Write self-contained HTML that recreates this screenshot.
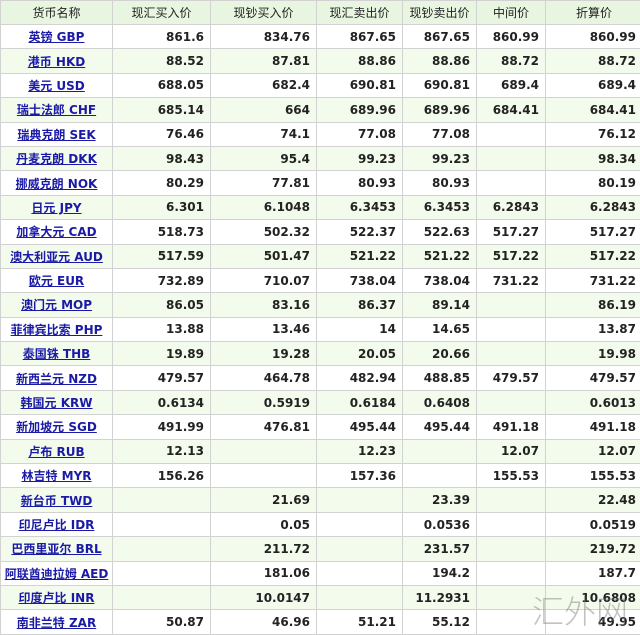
<!DOCTYPE html>
<html><head><meta charset="utf-8"><style>
body{margin:0;background:#fff;width:640px;height:634px;overflow:hidden;position:relative}
table{border-collapse:collapse;table-layout:fixed;width:642px;font-family:"DejaVu Sans","Noto Sans CJK SC",sans-serif;font-size:12px;font-weight:bold;color:#222}
td,th{border:1px solid #d2d2d2;height:23.4px;padding:0 6px;white-space:nowrap;overflow:hidden}
th{background:#e8f5e0;font-weight:normal;color:#222;height:23px;font-size:12px}
td{text-align:right}
td:first-child{text-align:center;padding:0}
tr:nth-child(odd) td{background:#f3fbec}
a{color:#1a1aa6;text-decoration:underline}
.wm{position:absolute;left:532px;top:592px;font-family:"Noto Sans CJK SC",sans-serif;font-size:32px;line-height:36px;color:rgba(120,120,120,.45);white-space:nowrap;font-weight:300}
</style></head><body>
<table>
<colgroup><col style="width:112px"><col style="width:98px"><col style="width:106px"><col style="width:86px"><col style="width:74px"><col style="width:69px"><col style="width:97px"></colgroup>
<tr><th>货币名称</th><th>现汇买入价</th><th>现钞买入价</th><th>现汇卖出价</th><th>现钞卖出价</th><th>中间价</th><th>折算价</th></tr>
<tr><td><a>英镑 GBP</a></td><td>861.6</td><td>834.76</td><td>867.65</td><td>867.65</td><td>860.99</td><td>860.99</td></tr>
<tr><td><a>港币 HKD</a></td><td>88.52</td><td>87.81</td><td>88.86</td><td>88.86</td><td>88.72</td><td>88.72</td></tr>
<tr><td><a>美元 USD</a></td><td>688.05</td><td>682.4</td><td>690.81</td><td>690.81</td><td>689.4</td><td>689.4</td></tr>
<tr><td><a>瑞士法郎 CHF</a></td><td>685.14</td><td>664</td><td>689.96</td><td>689.96</td><td>684.41</td><td>684.41</td></tr>
<tr><td><a>瑞典克朗 SEK</a></td><td>76.46</td><td>74.1</td><td>77.08</td><td>77.08</td><td></td><td>76.12</td></tr>
<tr><td><a>丹麦克朗 DKK</a></td><td>98.43</td><td>95.4</td><td>99.23</td><td>99.23</td><td></td><td>98.34</td></tr>
<tr><td><a>挪威克朗 NOK</a></td><td>80.29</td><td>77.81</td><td>80.93</td><td>80.93</td><td></td><td>80.19</td></tr>
<tr><td><a>日元 JPY</a></td><td>6.301</td><td>6.1048</td><td>6.3453</td><td>6.3453</td><td>6.2843</td><td>6.2843</td></tr>
<tr><td><a>加拿大元 CAD</a></td><td>518.73</td><td>502.32</td><td>522.37</td><td>522.63</td><td>517.27</td><td>517.27</td></tr>
<tr><td><a>澳大利亚元 AUD</a></td><td>517.59</td><td>501.47</td><td>521.22</td><td>521.22</td><td>517.22</td><td>517.22</td></tr>
<tr><td><a>欧元 EUR</a></td><td>732.89</td><td>710.07</td><td>738.04</td><td>738.04</td><td>731.22</td><td>731.22</td></tr>
<tr><td><a>澳门元 MOP</a></td><td>86.05</td><td>83.16</td><td>86.37</td><td>89.14</td><td></td><td>86.19</td></tr>
<tr><td><a>菲律宾比索 PHP</a></td><td>13.88</td><td>13.46</td><td>14</td><td>14.65</td><td></td><td>13.87</td></tr>
<tr><td><a>泰国铢 THB</a></td><td>19.89</td><td>19.28</td><td>20.05</td><td>20.66</td><td></td><td>19.98</td></tr>
<tr><td><a>新西兰元 NZD</a></td><td>479.57</td><td>464.78</td><td>482.94</td><td>488.85</td><td>479.57</td><td>479.57</td></tr>
<tr><td><a>韩国元 KRW</a></td><td>0.6134</td><td>0.5919</td><td>0.6184</td><td>0.6408</td><td></td><td>0.6013</td></tr>
<tr><td><a>新加坡元 SGD</a></td><td>491.99</td><td>476.81</td><td>495.44</td><td>495.44</td><td>491.18</td><td>491.18</td></tr>
<tr><td><a>卢布 RUB</a></td><td>12.13</td><td></td><td>12.23</td><td></td><td>12.07</td><td>12.07</td></tr>
<tr><td><a>林吉特 MYR</a></td><td>156.26</td><td></td><td>157.36</td><td></td><td>155.53</td><td>155.53</td></tr>
<tr><td><a>新台币 TWD</a></td><td></td><td>21.69</td><td></td><td>23.39</td><td></td><td>22.48</td></tr>
<tr><td><a>印尼卢比 IDR</a></td><td></td><td>0.05</td><td></td><td>0.0536</td><td></td><td>0.0519</td></tr>
<tr><td><a>巴西里亚尔 BRL</a></td><td></td><td>211.72</td><td></td><td>231.57</td><td></td><td>219.72</td></tr>
<tr><td><a>阿联酋迪拉姆 AED</a></td><td></td><td>181.06</td><td></td><td>194.2</td><td></td><td>187.7</td></tr>
<tr><td><a>印度卢比 INR</a></td><td></td><td>10.0147</td><td></td><td>11.2931</td><td></td><td>10.6808</td></tr>
<tr><td><a>南非兰特 ZAR</a></td><td>50.87</td><td>46.96</td><td>51.21</td><td>55.12</td><td></td><td>49.95</td></tr>
</table>
<div class="wm">汇外网</div>
</body></html>
